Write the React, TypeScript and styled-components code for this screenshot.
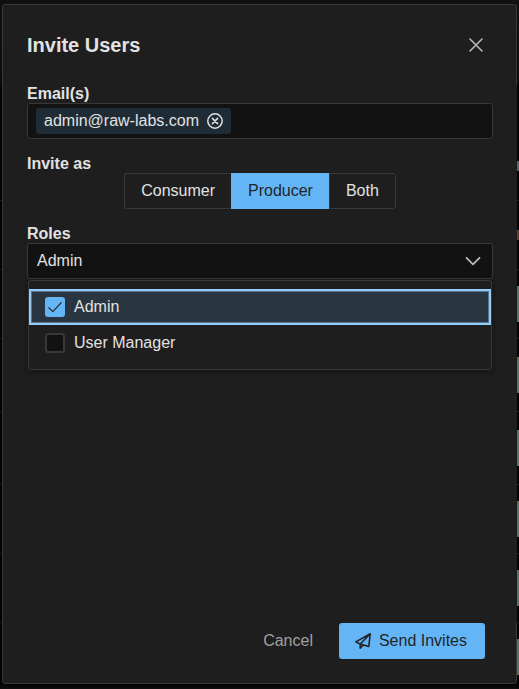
import React, { useState } from "react";
import styled, { createGlobalStyle, css } from "styled-components";

const color = {
  surface: "#1e1e1e",
  field: "#121212",
  border: "#383838",
  text: "#e2e2e2",
  muted: "#a0a0a0",
  primary: "#64b5f6",
  onPrimary: "#212529",
  chip: "#1f2c36",
  highlight: "#293641",
  focus: "#93cbf9",
};

const GlobalStyle = createGlobalStyle`
  *, *::before, *::after { box-sizing: border-box; }
  body {
    margin: 0;
    background: #020202;
    color: ${color.text};
    font-family: "Liberation Sans", Arial, sans-serif;
    font-size: 16px;
    line-height: 18px;
  }
  button, input { font: inherit; color: inherit; }
  button { margin: 0; cursor: pointer; }
`;

const Page = styled.div`
  position: relative;
  display: flex;
  min-height: 100vh;
  padding: 4px 2px;
  padding-bottom: 5px;
  background: linear-gradient(#101010 0, #0d0d0d 80px, #020202 90px, #020202 calc(100% - 6px), #0d0d0d 100%);
`;

const Backdrop = styled.div`
  position: absolute;
  inset: 0;
  overflow: hidden;
  display: flex;
  flex-direction: column;
  padding-top: 132px;
`;

const BackRow = styled.div<{ $tone: "blue" | "orange" | "green"; $tall?: boolean }>`
  flex: none;
  display: flex;
  justify-content: flex-end;
  align-items: center;
  height: ${(p) => (p.$tall ? 73 : 69)}px;
  border-bottom: 1px solid #1a1a1a;

  &::after {
    content: "";
    width: 8px;
    height: ${(p) => (p.$tone === "green" ? 36 : 10)}px;
    background: ${(p) =>
      p.$tone === "green" ? "#5d7061" : p.$tone === "orange" ? "#5a4130" : "#57626e"};
  }
`;

const Dialog = styled.section`
  position: relative;
  flex: 1;
  display: flex;
  flex-direction: column;
  min-width: 0;
  background: ${color.surface};
  border: 1px solid ${color.border};
  border-radius: 3px;
`;

const Header = styled.header`
  display: flex;
  align-items: center;
  justify-content: space-between;
  padding: 24px;
`;

const Title = styled.h1`
  margin: 0;
  font-size: 20px;
  line-height: 24px;
  font-weight: 700;
`;

const CloseButton = styled.button`
  display: grid;
  place-items: center;
  width: 32px;
  height: 32px;
  padding: 0;
  border: 0;
  border-radius: 50%;
  background: transparent;
  color: #b8b8b8;
`;

const Content = styled.div`
  flex: 1;
  display: flex;
  flex-direction: column;
  gap: 16px;
  margin-right: -1px;
  padding: 0 24px;
  background: ${color.surface};
`;

const Field = styled.div`
  display: flex;
  flex-direction: column;
`;

const labelStyle = css`
  font-weight: 700;
`;

const Label = styled.label`
  ${labelStyle}
`;

const GroupLabel = styled.span`
  ${labelStyle}
`;

const ChipField = styled.div`
  display: flex;
  align-items: center;
  gap: 8px;
  height: 36px;
  padding: 0 8px;
  background: ${color.field};
  border: 1px solid ${color.border};
  border-radius: 3px;
`;

const Chip = styled.span`
  display: flex;
  align-items: center;
  gap: 8px;
  height: 26px;
  padding: 0 8px;
  background: ${color.chip};
  border-radius: 3px;
`;

const ChipRemove = styled.button`
  display: flex;
  padding: 0;
  border: 0;
  background: transparent;
`;

const ChipInput = styled.input`
  flex: 1;
  min-width: 0;
  padding: 0;
  border: 0;
  outline: 0;
  background: transparent;
`;

const ToggleGroup = styled.div`
  display: flex;
  align-self: center;
`;

const Toggle = styled.button<{ $active: boolean }>`
  height: 36px;
  padding: 0 16px;
  border: 1px solid ${(p) => (p.$active ? color.primary : color.border)};
  border-right-width: 0;
  background: ${(p) => (p.$active ? color.primary : color.surface)};
  color: ${(p) => (p.$active ? color.onPrimary : color.text)};

  &:first-child {
    border-radius: 3px 0 0 3px;
  }
  &:last-child {
    border-right-width: 1px;
    border-radius: 0 3px 3px 0;
  }
`;

const SelectWrap = styled.div`
  position: relative;
`;

const SelectButton = styled.button`
  display: flex;
  align-items: center;
  justify-content: space-between;
  width: 100%;
  height: 36px;
  padding: 0 11px 0 9px;
  border: 1px solid ${color.border};
  border-radius: 3px;
  background: ${color.field};
  text-align: left;
`;

const Panel = styled.ul`
  position: absolute;
  top: 100%;
  left: 0;
  right: 0;
  margin: 1px 1px 0;
  padding: 8px 0;
  list-style: none;
  background: ${color.surface};
  border: 1px solid ${color.border};
  border-radius: 3px;
  box-shadow: 0 2px 6px rgba(0, 0, 0, 0.35);
`;

const Option = styled.label<{ $focused: boolean }>`
  display: flex;
  align-items: center;
  gap: 9px;
  height: 36px;
  padding: 0 16px;
  cursor: pointer;
  ${(p) =>
    p.$focused &&
    css`
      background: ${color.highlight};
      box-shadow: inset 0 0 0 2px ${color.focus}, inset 0 0 0 3px #54738d;
    `}
`;

const CheckHolder = styled.span`
  display: grid;
  place-items: center;

  & > * {
    grid-area: 1 / 1;
  }
  & > svg {
    pointer-events: none;
  }
`;

const Checkbox = styled.input`
  appearance: none;
  width: 20px;
  height: 20px;
  margin: 0;
  border: 2px solid ${color.border};
  border-radius: 3px;
  background: ${color.field};

  &:checked {
    border-color: ${color.primary};
    background: ${color.primary};
  }
`;

const Footer = styled.footer`
  display: flex;
  justify-content: flex-end;
  gap: 10px;
  padding: 0 31px 24px;
`;

const Action = styled.button<{ $primary?: boolean }>`
  display: flex;
  align-items: center;
  gap: 8px;
  height: 36px;
  padding: 0 ${(p) => (p.$primary ? 18 : 16)}px 0 16px;
  border: 0;
  border-radius: 3px;
  background: ${(p) => (p.$primary ? color.primary : "transparent")};
  color: ${(p) => (p.$primary ? color.onPrimary : color.muted)};
`;

const CloseIcon = () => (
  <svg width="14" height="14" viewBox="0 0 14 14" fill="none" stroke="currentColor" strokeWidth="1.6" strokeLinecap="round" aria-hidden="true">
    <path d="M1 1l12 12M13 1L1 13" />
  </svg>
);

const RemoveIcon = () => (
  <svg width="16" height="16" viewBox="0 0 16 16" fill="none" stroke="currentColor" strokeWidth="1.5" strokeLinecap="round" aria-hidden="true">
    <circle cx="8" cy="8" r="7.2" />
    <path d="M5.4 5.4l5.2 5.2M10.6 5.4l-5.2 5.2" />
  </svg>
);

const ChevronIcon = () => (
  <svg width="16" height="16" viewBox="0 0 16 16" fill="none" stroke="#b8b8b8" strokeWidth="1.8" strokeLinecap="round" strokeLinejoin="round" aria-hidden="true">
    <path d="M1.5 4.8L8 11.3l6.5-6.5" />
  </svg>
);

const CheckIcon = () => (
  <svg width="14" height="14" viewBox="0 0 14 14" fill="none" stroke={color.onPrimary} strokeWidth="1.2" strokeLinecap="round" strokeLinejoin="round" aria-hidden="true">
    <path d="M.8 7.6l4 4L13.3 2.6" />
  </svg>
);

const SendIcon = () => (
  <svg width="16" height="16" viewBox="0 0 16 16" fill="none" stroke="currentColor" strokeWidth="1.6" strokeLinecap="round" strokeLinejoin="round" aria-hidden="true">
    <path d="M15.2 .8L.8 8.9l4.4 2.1 8.6 2.4L15.2 .8L5.2 11v4.2l3-3.2" />
  </svg>
);

const audiences = ["Consumer", "Producer", "Both"];
const roles = ["Admin", "User Manager"];

export default function App() {
  const [emails, setEmails] = useState(["admin@raw-labs.com"]);
  const [audience, setAudience] = useState("Producer");
  const [selected, setSelected] = useState(["Admin"]);
  const [open, setOpen] = useState(true);

  const toggleRole = (role: string) =>
    setSelected((s) => (s.includes(role) ? s.filter((r) => r !== role) : [...s, role]));

  return (
    <>
      <GlobalStyle />
      <Page>
        <Backdrop aria-hidden="true">
          <BackRow $tone="blue" />
          <BackRow $tone="orange" />
          <BackRow $tone="green" />
          <BackRow $tone="green" $tall />
          <BackRow $tone="green" $tall />
          <BackRow $tone="green" />
          <BackRow $tone="green" />
          <BackRow $tone="green" />
        </Backdrop>
        <Dialog role="dialog" aria-labelledby="dialog-title">
          <Header>
            <Title id="dialog-title">Invite Users</Title>
            <CloseButton type="button" aria-label="Close">
              <CloseIcon />
            </CloseButton>
          </Header>
          <Content>
            <Field>
              <Label htmlFor="emails">Email(s)</Label>
              <ChipField>
                {emails.map((email) => (
                  <Chip key={email}>
                    {email}
                    <ChipRemove
                      type="button"
                      aria-label={`Remove ${email}`}
                      onClick={() => setEmails(emails.filter((e) => e !== email))}
                    >
                      <RemoveIcon />
                    </ChipRemove>
                  </Chip>
                ))}
                <ChipInput id="emails" type="text" />
              </ChipField>
            </Field>
            <Field>
              <GroupLabel id="invite-as">Invite as</GroupLabel>
              <ToggleGroup role="group" aria-labelledby="invite-as">
                {audiences.map((name) => (
                  <Toggle
                    key={name}
                    type="button"
                    $active={name === audience}
                    aria-pressed={name === audience}
                    onClick={() => setAudience(name)}
                  >
                    {name}
                  </Toggle>
                ))}
              </ToggleGroup>
            </Field>
            <Field>
              <Label htmlFor="roles">Roles</Label>
              <SelectWrap>
                <SelectButton
                  id="roles"
                  type="button"
                  aria-expanded={open}
                  aria-controls="roles-panel"
                  onClick={() => setOpen(!open)}
                >
                  {selected.join(", ")}
                  <ChevronIcon />
                </SelectButton>
                {open && (
                  <Panel id="roles-panel">
                    {roles.map((role, i) => (
                      <li key={role}>
                        <Option $focused={i === 0}>
                          <CheckHolder>
                            <Checkbox
                              type="checkbox"
                              checked={selected.includes(role)}
                              onChange={() => toggleRole(role)}
                            />
                            {selected.includes(role) && <CheckIcon />}
                          </CheckHolder>
                          {role}
                        </Option>
                      </li>
                    ))}
                  </Panel>
                )}
              </SelectWrap>
            </Field>
          </Content>
          <Footer>
            <Action type="button">Cancel</Action>
            <Action type="submit" $primary>
              <SendIcon />
              Send Invites
            </Action>
          </Footer>
        </Dialog>
      </Page>
    </>
  );
}
